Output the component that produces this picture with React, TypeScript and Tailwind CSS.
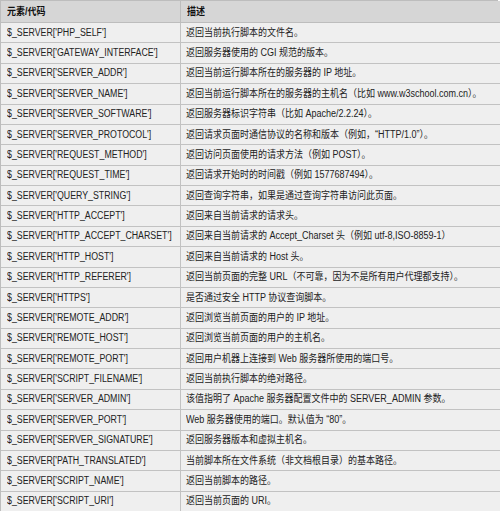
import React from "react";

const rows: [string, string][] = [
  ["PHP_SELF", "返回当前执行脚本的文件名。"],
  ["GATEWAY_INTERFACE", "返回服务器使用的 CGI 规范的版本。"],
  ["SERVER_ADDR", "返回当前运行脚本所在的服务器的 IP 地址。"],
  ["SERVER_NAME", "返回当前运行脚本所在的服务器的主机名（比如 www.w3school.com.cn）。"],
  ["SERVER_SOFTWARE", "返回服务器标识字符串（比如 Apache/2.2.24）。"],
  ["SERVER_PROTOCOL", "返回请求页面时通信协议的名称和版本（例如，“HTTP/1.0”）。"],
  ["REQUEST_METHOD", "返回访问页面使用的请求方法（例如 POST）。"],
  ["REQUEST_TIME", "返回请求开始时的时间戳（例如 1577687494）。"],
  ["QUERY_STRING", "返回查询字符串，如果是通过查询字符串访问此页面。"],
  ["HTTP_ACCEPT", "返回来自当前请求的请求头。"],
  ["HTTP_ACCEPT_CHARSET", "返回来自当前请求的 Accept_Charset 头（例如 utf-8,ISO-8859-1）"],
  ["HTTP_HOST", "返回来自当前请求的 Host 头。"],
  ["HTTP_REFERER", "返回当前页面的完整 URL（不可靠，因为不是所有用户代理都支持）。"],
  ["HTTPS", "是否通过安全 HTTP 协议查询脚本。"],
  ["REMOTE_ADDR", "返回浏览当前页面的用户的 IP 地址。"],
  ["REMOTE_HOST", "返回浏览当前页面的用户的主机名。"],
  ["REMOTE_PORT", "返回用户机器上连接到 Web 服务器所使用的端口号。"],
  ["SCRIPT_FILENAME", "返回当前执行脚本的绝对路径。"],
  ["SERVER_ADMIN", "该值指明了 Apache 服务器配置文件中的 SERVER_ADMIN 参数。"],
  ["SERVER_PORT", "Web 服务器使用的端口。默认值为 “80”。"],
  ["SERVER_SIGNATURE", "返回服务器版本和虚拟主机名。"],
  ["PATH_TRANSLATED", "当前脚本所在文件系统（非文档根目录）的基本路径。"],
  ["SCRIPT_NAME", "返回当前脚本的路径。"],
  ["SCRIPT_URI", "返回当前页面的 URI。"],
];

const font = "font-['Liberation_Sans','Noto_Sans_CJK_SC',sans-serif]";

function Key({ children }: { children: React.ReactNode }) {
  return (
    <span className="inline-block origin-left scale-x-[0.88] whitespace-nowrap text-[10px] leading-none text-[#222]">
      {children}
    </span>
  );
}

function Desc({ children, bold }: { children: React.ReactNode; bold?: boolean }) {
  return (
    <span
      className={`inline-block origin-left scale-x-[0.9] whitespace-nowrap text-[10px] leading-none ${
        bold ? "font-bold text-[#111]" : "text-[#222]"
      }`}
    >
      {children}
    </span>
  );
}

export default function App() {
  return (
    <div className={`w-[500px] h-[511px] bg-white overflow-hidden ${font}`}>
      <div className="w-[498px] border-l border-t border-r border-[#bdbdbd] grid grid-cols-[180px_1fr]">
        <div className="h-[22px] bg-[#d6d6d6] border-r border-b border-[#bdbdbd] flex items-center pl-[6px]">
          <Desc bold>元素/代码</Desc>
        </div>
        <div className="h-[22px] bg-[#d6d6d6] border-b border-[#bdbdbd] flex items-center pl-[6px]">
          <Desc bold>描述</Desc>
        </div>
        {rows.map(([k, d]) => (
          <React.Fragment key={k}>
            <div className="h-[20.375px] bg-[#efefef] border-r border-b border-[#c2c2c2] flex items-center pl-[6px]">
              <Key>$_SERVER['{k}']</Key>
            </div>
            <div className="h-[20.375px] bg-[#efefef] border-b border-[#c2c2c2] flex items-center pl-[5px]">
              <Desc>{d}</Desc>
            </div>
          </React.Fragment>
        ))}
      </div>
    </div>
  );
}
